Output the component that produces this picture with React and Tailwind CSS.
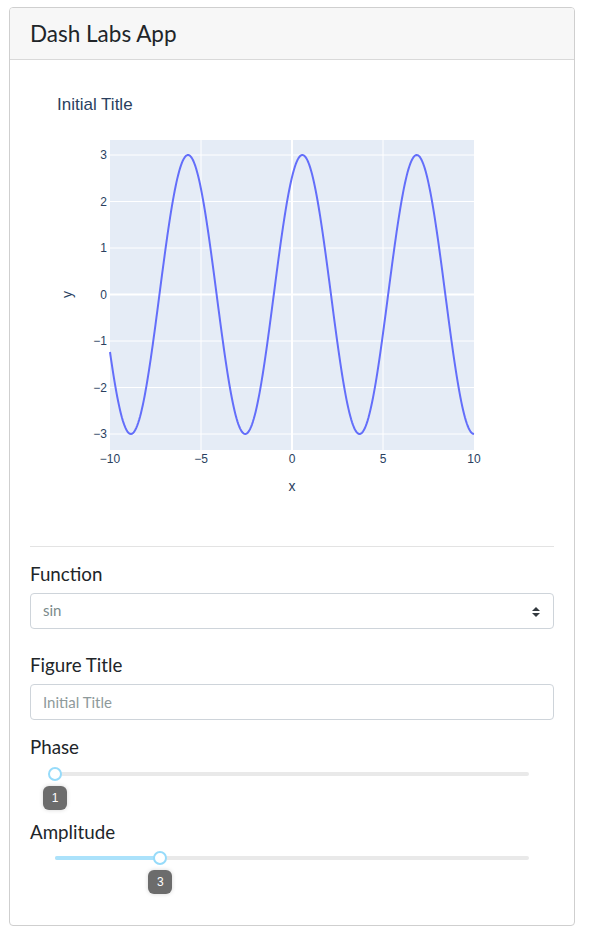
import React from "react";

const PLOT = { left: 80, right: 444, top: 60, bottom: 370 };
const xPix = (u) => PLOT.left + (u + 10) * 18.2;
const yPix = (v) => 214.5 - v * 46.5;

const buildPath = () => {
  let d = "";
  for (let i = 0; i <= 400; i++) {
    const u = -10 + i * 0.05;
    const v = 3 * Math.sin(u + 1);
    d += (i === 0 ? "M" : "L") + xPix(u).toFixed(2) + "," + yPix(v).toFixed(2);
  }
  return d;
};

const SineChart = ({ title }) => {
  const yTicks = [3, 2, 1, 0, -1, -2, -3];
  const xTicks = [-10, -5, 0, 5, 10];
  const fmt = (n) => (n < 0 ? "\u2212" + Math.abs(n) : String(n));

  return (
    <svg width="524" height="450" viewBox="0 0 524 450" className="block" style={{ fontFamily: '"Liberation Sans", Arial, sans-serif' }}>
      <text x="27" y="30" fontSize="17" fill="#2a3f5f">{title}</text>
      <rect x={PLOT.left} y={PLOT.top} width={PLOT.right - PLOT.left} height={PLOT.bottom - PLOT.top} fill="#e5ecf6" />
      {xTicks.filter((u) => u !== -10 && u !== 10).map((u) => (
        <line key={"gx" + u} x1={xPix(u)} x2={xPix(u)} y1={PLOT.top} y2={PLOT.bottom} stroke="#fff" strokeWidth={u === 0 ? 2 : 1} />
      ))}
      {yTicks.map((v) => (
        <line key={"gy" + v} x1={PLOT.left} x2={PLOT.right} y1={yPix(v)} y2={yPix(v)} stroke="#fff" strokeWidth={v === 0 ? 2 : 1} />
      ))}
      <path d={buildPath()} fill="none" stroke="#636efa" strokeWidth="2" strokeLinejoin="round" />
      {yTicks.map((v) => (
        <text key={"ty" + v} x="77" y={yPix(v) + 4} fontSize="12" fill="#2a3f5f" textAnchor="end">{fmt(v)}</text>
      ))}
      {xTicks.map((u) => (
        <text key={"tx" + u} x={xPix(u)} y="383" fontSize="12" fill="#2a3f5f" textAnchor="middle">{fmt(u)}</text>
      ))}
      <text x="262" y="411" fontSize="14" fill="#2a3f5f" textAnchor="middle">x</text>
      <text x="0" y="0" fontSize="14" fill="#2a3f5f" textAnchor="middle" transform="translate(42,214.5) rotate(-90)">y</text>
    </svg>
  );
};

const Slider = ({ value, min, max }) => {
  const pct = ((value - min) / (max - min)) * 100;
  return (
    <div className="px-[25px]">
      <div className="relative h-[51px]">
        <div className="absolute left-0 right-0 top-[13px] h-[4px] rounded-full bg-[#e9e9e9]" />
        <div className="absolute left-0 top-[13px] h-[4px] rounded-full bg-[#abe2fb]" style={{ width: pct + "%" }} />
        <div
          className="absolute top-[8px] h-[14px] w-[14px] -translate-x-1/2 rounded-full border-2 border-[#96dbfa] bg-white"
          style={{ left: pct + "%" }}
        />
        <div
          className="absolute top-[27px] flex h-[24px] w-[24px] -translate-x-1/2 items-center justify-center rounded-[6px] bg-[#6c6c6c] text-[12px] text-white shadow-[0_0_4px_rgba(0,0,0,0.17)]"
          style={{ left: pct + "%", fontFamily: '"Liberation Sans", Arial, sans-serif' }}
        >
          {value}
        </div>
      </div>
    </div>
  );
};

const Label = ({ children, className = "mb-2" }) => (
  <h5 className={"text-[18.75px] leading-[1.2] font-normal text-[#212529] " + className}>{children}</h5>
);

export default function App() {
  return (
    <div className="min-h-screen bg-white pt-[7px] pl-[9px]" style={{ fontFamily: 'Lato, "Noto Sans", sans-serif' }}>
      <div className="w-[566px] h-[919px] rounded-[4px] border border-[#cfcfcf] overflow-hidden">
        <div className="bg-[#f7f7f7] border-b border-[#d9d9d9] px-5 py-3">
          <h4 className="text-[22.5px] leading-[1.2] font-normal text-[#212529]">Dash Labs App</h4>
        </div>
        <div className="p-5">
          <SineChart title="Initial Title" />
          <hr className="my-4 border-t border-[#e3e3e3]" />
          <Label className="mb-[7px]">Function</Label>
          <div className="relative flex h-[36px] items-center rounded-[4px] border border-[#ced4da] pl-3 pr-3 text-[15px] text-[#7b8a8b]">
            <span>sin</span>
            <svg className="absolute right-[13px] top-[13px]" width="8" height="10" viewBox="0 0 8 10">
              <path d="M4 0 L8 4 H0 Z" fill="#343a40" />
              <path d="M0 6 H8 L4 10 Z" fill="#343a40" />
            </svg>
          </div>
          <Label className="mt-[25px] mb-2">Figure Title</Label>
          <div className="flex h-[36px] items-center rounded-[4px] border border-[#ced4da] px-3 text-[15px] text-[#8e9a9b]">
            Initial Title
          </div>
          <Label className="mt-[16px] mb-0">Phase</Label>
          <Slider value={1} min={1} max={10} />
          <Label className="mt-[11px] mb-0">Amplitude</Label>
          <Slider value={3} min={1} max={10} />
        </div>
      </div>
    </div>
  );
}
